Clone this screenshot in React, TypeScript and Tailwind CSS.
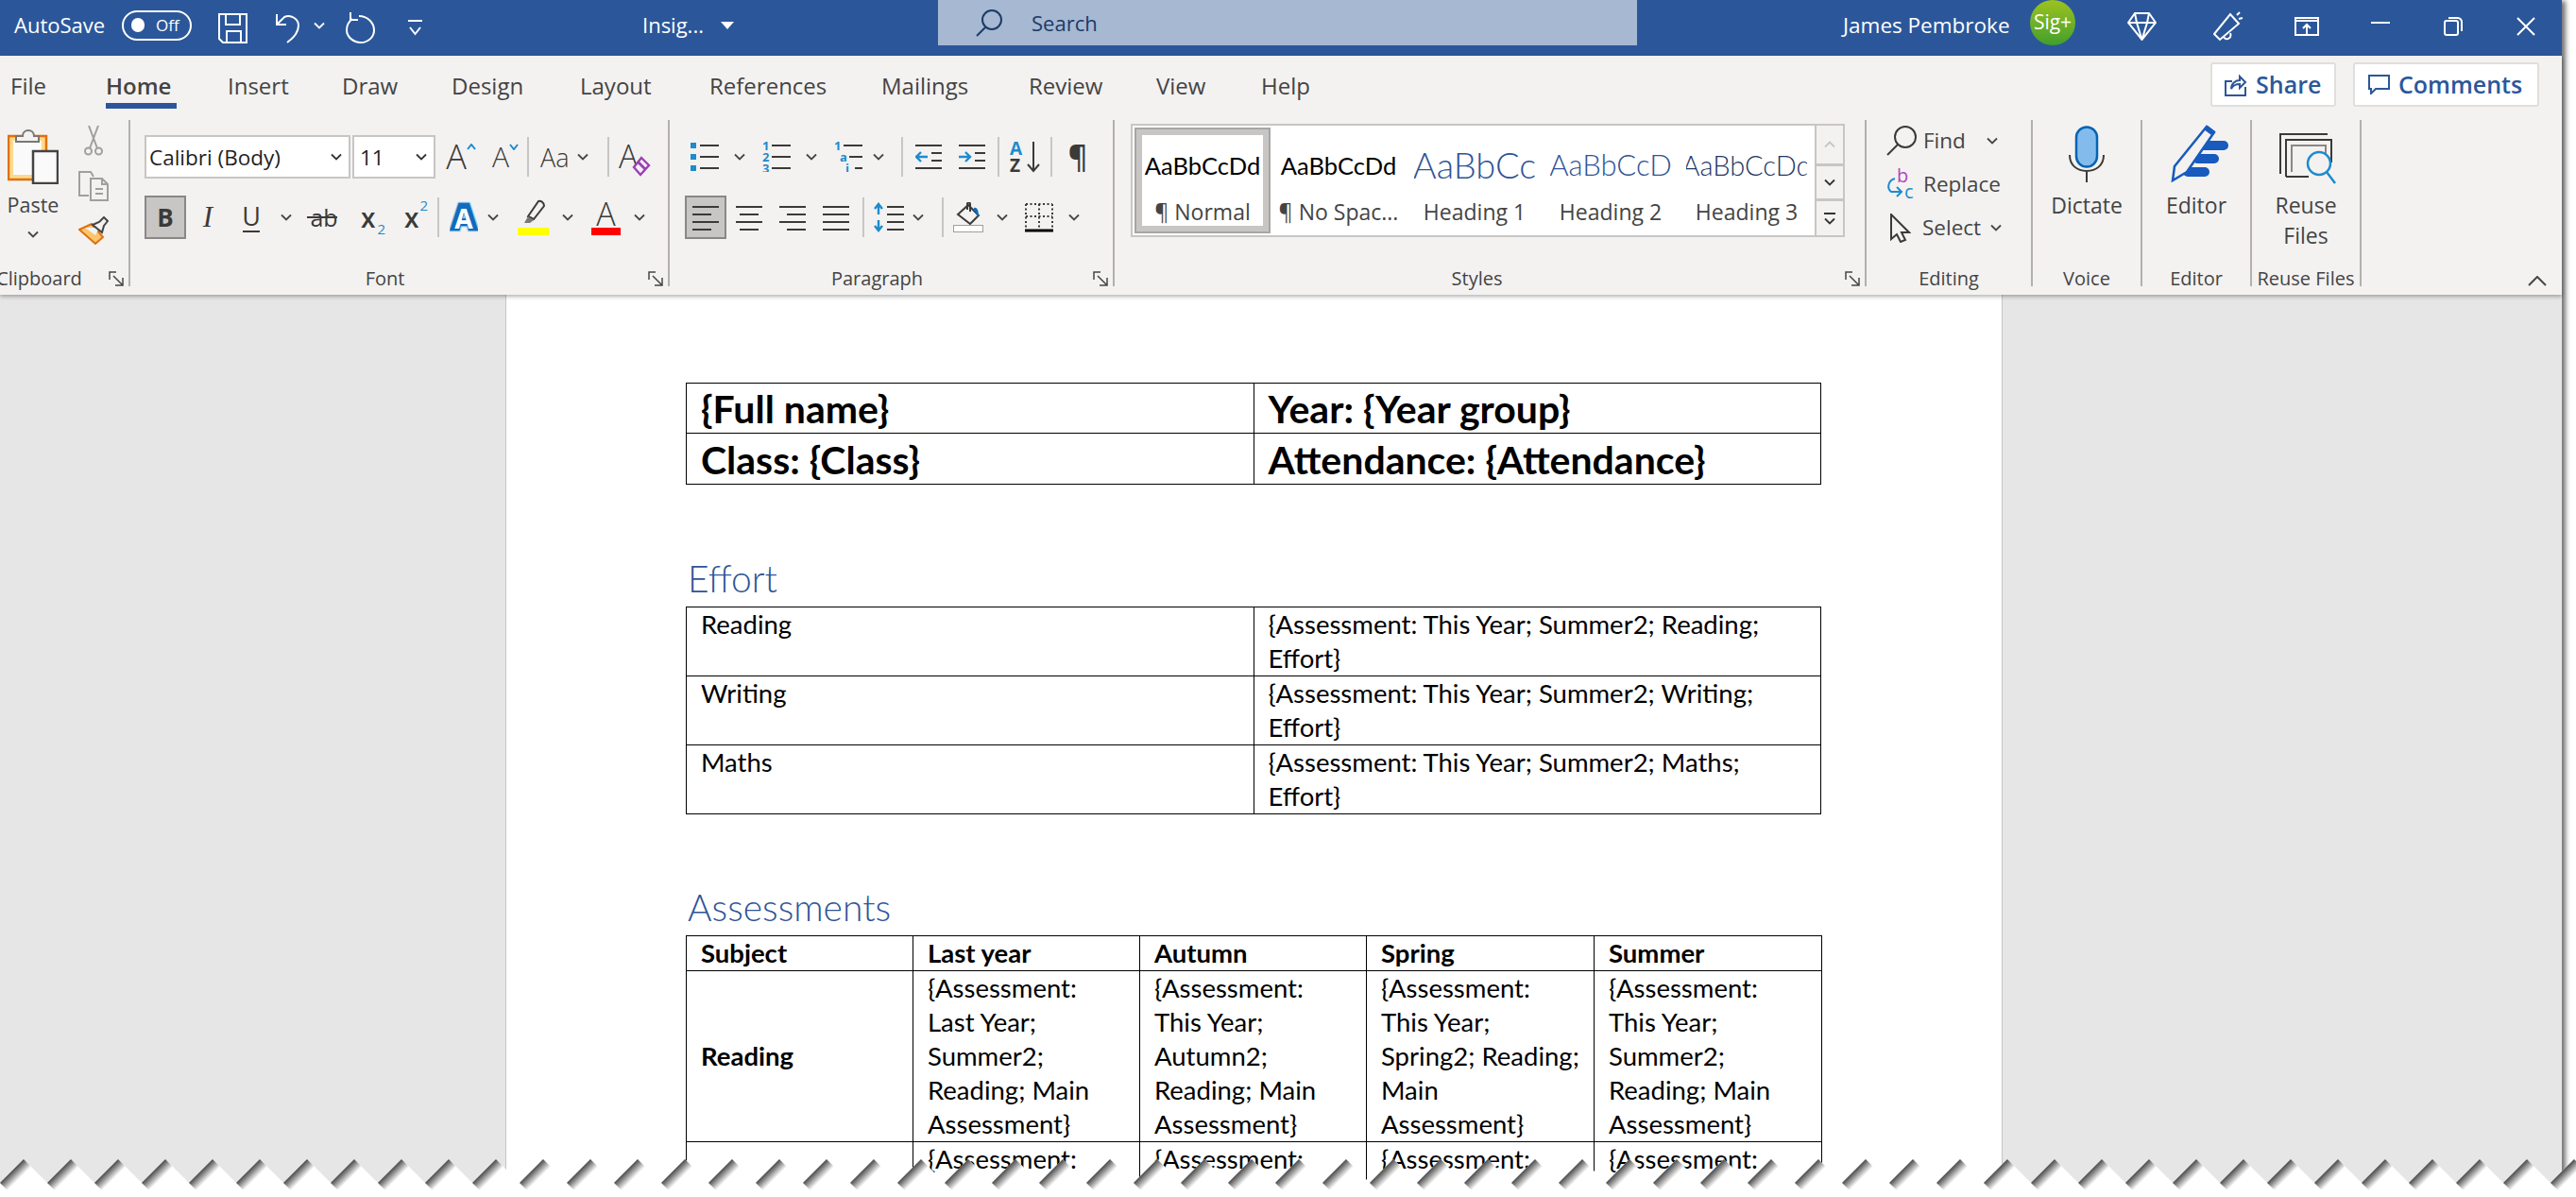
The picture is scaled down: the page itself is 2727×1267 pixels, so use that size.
import React from "react";

const dark = "#3b3a39";
const blue = "#1e8bcd";

function Chev({ className = "", color = "#484644" }: { className?: string; color?: string }) {
  return (
    <svg className={className} width="12" height="8" viewBox="0 0 12 8" fill="none">
      <path d="M1 1.5l5 5 5-5" stroke={color} strokeWidth="1.8" />
    </svg>
  );
}

function Cell({ className = "", children }: { className?: string; children?: React.ReactNode }) {
  return <div className={`flex shrink-0 items-center justify-center ${className}`}>{children}</div>;
}

function Sep({ className = "" }: { className?: string }) {
  return <div className={`h-[42px] w-[2px] shrink-0 bg-[#c8c6c4] ${className}`} />;
}

function Launcher() {
  return (
    <svg className="shrink-0" width="16" height="16" viewBox="0 0 16 16" fill="none" stroke="#484644" strokeWidth="1.5">
      <path d="M8 1H1v8M5 5l10 10M15 7v8H7" />
    </svg>
  );
}

function Group({
  label,
  className,
  launcher,
  labelClass = "",
  children,
}: {
  label: string;
  className: string;
  launcher?: boolean;
  labelClass?: string;
  children: React.ReactNode;
}) {
  return (
    <div className={`flex h-[176px] shrink-0 flex-col border-r-2 border-[#b3b0ad] ${className}`}>
      <div className="min-h-0 flex-1">{children}</div>
      <div className={`flex h-[16px] items-center ${launcher ? "pr-[5px]" : ""}`}>
        <div className={`flex-1 whitespace-nowrap text-center text-[20px] leading-[16px] text-[#444] ${labelClass}`}>{label}</div>
        {launcher && <Launcher />}
      </div>
    </div>
  );
}

function ListIcon({ marks }: { marks: "box" | "num" | "multi" }) {
  const ys = [4, 16, 28];
  return (
    <svg width="30" height="32" viewBox="0 0 30 32" fill="none">
      {ys.map((y) => (
        <path key={y} d={marks === "multi" && y === 28 ? "M22 28h8" : marks === "multi" && y === 16 ? "M16 16h14" : `M10 ${y}h20`} stroke={dark} strokeWidth="2" />
      ))}
      {marks === "box" && ys.map((y) => <rect key={y} x="0" y={y - 3} width="6" height="6" fill={blue} />)}
      {marks === "num" &&
        ["1", "2", "3"].map((t, i) => (
          <text key={t} x="0" y={ys[i] + 5} fontSize="13" fontWeight="700" fill={blue} fontFamily="Open Sans">
            {t}
          </text>
        ))}
      {marks === "multi" &&
        ["1", "a", "i"].map((t, i) => (
          <text key={t} x={i * 6} y={ys[i] + 5} fontSize="13" fontWeight="700" fill={blue} fontFamily="Open Sans">
            {t}
          </text>
        ))}
    </svg>
  );
}

function IndentIcon({ dir }: { dir: "in" | "out" }) {
  return (
    <svg width="28" height="32" viewBox="0 0 28 32" fill="none">
      <path d="M0 4h28M0 28h28M17 12h11M17 20h11" stroke={dark} strokeWidth="2" />
      <path d={dir === "out" ? "M13 16H1M6 11l-5 5 5 5" : "M0 16h12M7 11l5 5-5 5"} stroke={blue} strokeWidth="2.4" />
    </svg>
  );
}

function AlignIcon({ kind }: { kind: "left" | "center" | "right" | "full" }) {
  const shortLine = kind === "left" ? "0" : kind === "center" ? "4" : "8";
  return (
    <svg width="28" height="32" viewBox="0 0 28 32" fill="none" stroke={dark} strokeWidth="2">
      <path d="M0 5h28M0 21h28" />
      {kind === "full" ? <path d="M0 13h28M0 29h28" /> : (
        <>
          <path d={`M${shortLine} 13h20`} />
          <path d={`M${shortLine} 29h20`} />
        </>
      )}
    </svg>
  );
}

function PasteIcon() {
  return (
    <svg width="54" height="60" viewBox="0 0 54 60">
      <rect x="1" y="9" width="40" height="46" fill="#fdd98c" stroke="#e1700f" strokeWidth="2.5" />
      <rect x="6" y="14" width="30" height="36" fill="#fafafa" />
      <path d="M9 15v-6h7c0-8 12-8 12 0h5v6z" fill="#f3f2f1" stroke="#797775" strokeWidth="2" />
      <rect x="27" y="25" width="26" height="34" fill="#fafafa" stroke="#444" strokeWidth="2.5" />
    </svg>
  );
}

function PainterIcon() {
  return (
    <svg width="32" height="30" viewBox="0 0 32 30" fill="none">
      <path d="M1 14l13-6 12 14-8 7z" fill="#fbc56f" stroke="#e1700f" strokeWidth="2" />
      <path d="M7 12l15 0-4 8" fill="#f3f2f1" />
      <path d="M15 9l7-3 5-5 4 4-4 5-2 7z" fill="#f3f2f1" stroke="#444" strokeWidth="2" />
    </svg>
  );
}

function TextEffectA() {
  return (
    <svg width="32" height="36" viewBox="0 0 32 36">
      <text x="16" y="32" textAnchor="middle" fontSize="40" fontWeight="800" fontFamily="Open Sans" fill="#9dcdf0" stroke="#9dcdf0" strokeWidth="5">A</text>
      <text x="16" y="32" textAnchor="middle" fontSize="40" fontWeight="800" fontFamily="Open Sans" fill="#0f6cbd" stroke="#0f6cbd" strokeWidth="2.5">A</text>
      <text x="16" y="31" textAnchor="middle" fontSize="30" fontWeight="700" fontFamily="Open Sans" fill="#fff">A</text>
    </svg>
  );
}

function Dropdown({ label, className }: { label: string; className: string }) {
  return (
    <div className={`flex h-[46px] shrink-0 items-center justify-between border-2 border-[#c8c6c4] bg-white pl-[3px] pr-[7px] ${className}`}>
      <span className="mt-[2px] whitespace-nowrap text-[22.5px] text-[#1f1f1f]">{label}</span>
      <Chev color="#333" />
    </div>
  );
}

function StyleItem({
  preview,
  label,
  previewClass,
  selected,
}: {
  preview: string;
  label: string;
  previewClass: string;
  selected?: boolean;
}) {
  return (
    <div className={`flex h-[112px] w-[144px] shrink-0 flex-col items-center overflow-hidden ${selected ? "border-2 border-[#a6a6a6] shadow-[inset_0_0_0_6px_#c8c6c4]" : ""}`}>
      <div className={`flex h-[66px] w-[128px] items-end justify-center overflow-hidden whitespace-nowrap pb-[13px] font-['Lato',sans-serif] leading-none ${selected ? "mt-[-2px]" : ""} ${previewClass}`}>
        {preview}
      </div>
      <div className="mt-[8px] whitespace-nowrap text-[23px] leading-[30px] text-[#444]">{label}</div>
    </div>
  );
}

function BigLabel({ children }: { children: React.ReactNode }) {
  return <div className="text-center text-[23px] leading-[32px] text-[#444]">{children}</div>;
}

const tabs = [
  { name: "File", width: "w-[101px]" },
  { name: "Home", width: "w-[129px]", active: true },
  { name: "Insert", width: "w-[121px]" },
  { name: "Draw", width: "w-[116px]" },
  { name: "Design", width: "w-[136px]" },
  { name: "Layout", width: "w-[137px]" },
  { name: "References", width: "w-[182px]" },
  { name: "Mailings", width: "w-[156px]" },
  { name: "Review", width: "w-[135px]" },
  { name: "View", width: "w-[111px]" },
  { name: "Help", width: "w-[60px]" },
];

function TitleBar() {
  return (
    <div className="flex h-[59px] items-center bg-[#2b579a] pb-[6px] pl-[15px] text-[22px] text-white">
      <div className="w-[100px] shrink-0 whitespace-nowrap">AutoSave</div>
      <div className="ml-[14px] flex h-[32px] w-[74px] shrink-0 items-center rounded-full border-2 border-white pl-[8px]">
        <div className="h-[15px] w-[14px] rounded-full bg-white" />
        <span className="ml-[12px] text-[17px] leading-none">Off</span>
      </div>
      <svg className="ml-[28px] mt-[6px] shrink-0" width="31" height="32" viewBox="0 0 31 32" fill="none" stroke="#fff" strokeWidth="2">
        <path d="M1 1h29v30H5l-4-4zM8 1v11h15V1M9 31V19h15v12" />
      </svg>
      <svg className="ml-[28px] mt-[6px] shrink-0" width="27" height="32" viewBox="0 0 27 32" fill="none" stroke="#fff" strokeWidth="2">
        <path d="M3 1v11h10M3 12L11 4c7-3 15 2 15 9 0 7-5 13-12 18" />
      </svg>
      <Chev className="ml-[15px] shrink-0" color="#fff" />
      <svg className="ml-[22px] mt-[6px] shrink-0" width="32" height="34" viewBox="0 0 32 34" fill="none" stroke="#fff" strokeWidth="2">
        <path d="M14 4c9 0 16 7 16 15 0 7-6 13-14 13S1 26 1 19c0-5 2-9 6-12" />
        <path d="M5 0v8h8" />
      </svg>
      <svg className="ml-[34px] mt-[6px] shrink-0" width="15" height="20" viewBox="0 0 15 20" fill="none" stroke="#fff" strokeWidth="2">
        <path d="M0 2h15M2 9l5.5 7L13 9" />
      </svg>
      <div className="ml-[233px] w-[67px] shrink-0 whitespace-nowrap">Insig...</div>
      <div className="ml-[16px] h-0 w-0 shrink-0 border-x-[7px] border-t-[8px] border-x-transparent border-t-white" />
      <div className="ml-[216px] flex h-[48px] w-[740px] shrink-0 items-center self-start bg-[#a6b8d2] text-[#1c3a68]">
        <svg className="ml-[40px] shrink-0" width="28" height="29" viewBox="0 0 28 29" fill="none" stroke="#1c3a68" strokeWidth="2">
          <circle cx="17" cy="11" r="10" />
          <path d="M10 19L1 28" />
        </svg>
        <span className="ml-[31px]">Search</span>
      </div>
      <div className="ml-[218px] w-[178px] shrink-0 whitespace-nowrap text-[22.5px]">James Pembroke</div>
      <div className="ml-[20px] flex h-[48px] w-[48px] shrink-0 items-center justify-center self-start rounded-full bg-gradient-to-b from-[#9bc31c] to-[#3f9e2c] text-[21px]">Sig+</div>
      <svg className="ml-[55px] mt-[2px] shrink-0" width="31" height="30" viewBox="0 0 31 30" fill="none" stroke="#fff" strokeWidth="2">
        <path d="M8 1h15l7 10-14.500 18L1 11zM1 11h29M8 1l2 10 5.500 18M23 1l-2 10-5.500 18" />
      </svg>
      <svg className="ml-[60px] mt-[2px] shrink-0" width="32" height="32" viewBox="0 0 32 32" fill="none" stroke="#fff" strokeWidth="2">
        <path d="M1 24L18 3l9 10L7 30zM11 27c3 5 9 1 7-4M25 4l3-3M27 8l4-1" />
      </svg>
      <svg className="ml-[54px] mt-[2px] shrink-0" width="26" height="20" viewBox="0 0 26 20" fill="none" stroke="#fff" strokeWidth="2">
        <path d="M1 1h24v18H1zM1 4h24M13 18V8M9 12l4-4 4 4" />
      </svg>
      <div className="ml-[55px] mt-[-6px] h-[2px] w-[20px] shrink-0 bg-white" />
      <svg className="ml-[57px] mt-[2px] shrink-0" width="20" height="20" viewBox="0 0 20 20" fill="none" stroke="#fff" strokeWidth="2">
        <rect x="1" y="4" width="14" height="15" rx="2" />
        <path d="M5 1h10c2 0 4 2 4 4v10" />
      </svg>
      <svg className="ml-[57px] mt-[2px] shrink-0" width="20" height="20" viewBox="0 0 20 20" fill="none" stroke="#fff" strokeWidth="2">
        <path d="M1 1l18 18M19 1L1 19" />
      </svg>
    </div>
  );
}

function TabRow() {
  return (
    <div className="flex h-[68px] items-start justify-between pl-[11px] pr-[24px]">
      <div className="flex text-[24px] text-[#444]">
        {tabs.map((tab) => (
          <div key={tab.name} className={`pt-[15px] ${tab.width}`}>
            <div className={`leading-[34px] ${tab.active ? "font-semibold" : ""}`}>{tab.name}</div>
            {tab.active && <div className="mt-[1px] h-[6px] w-[75px] bg-[#2b579a]" />}
          </div>
        ))}
      </div>
      <div className="mt-[7px] flex gap-[18px] text-[25px] font-semibold text-[#2b579a]">
        <div className="flex h-[47px] w-[133px] items-center rounded-[3px] border-2 border-[#e1dfdd] bg-white pl-[13px]">
          <svg className="shrink-0" width="24" height="24" viewBox="0 0 24 24" fill="none" stroke="#2b579a" strokeWidth="2">
            <path d="M8 8H1v15h21v-9M7 16c0-6 5-9 9-9V3l6 6-6 6v-4c-4 0-7 1-9 5z" />
          </svg>
          <span className="ml-[9px]">Share</span>
        </div>
        <div className="flex h-[47px] w-[197px] items-center rounded-[3px] border-2 border-[#e1dfdd] bg-white pl-[14px]">
          <svg className="shrink-0" width="23" height="21" viewBox="0 0 23 21" fill="none" stroke="#2b579a" strokeWidth="2">
            <path d="M1 1h21v14H8l-5 5v-5H1z" />
          </svg>
          <span className="ml-[9px] whitespace-nowrap">Comments</span>
        </div>
      </div>
    </div>
  );
}

function ClipboardGroup() {
  return (
    <Group label="Clipboard" className="w-[138px]" launcher labelClass="ml-[-32px]">
      <div className="flex">
        <div className="ml-[7px] flex w-[56px] flex-col items-center pt-[8px]">
          <PasteIcon />
          <div className="mt-[6px] w-[60px] text-center text-[21.5px] leading-[32px] text-[#444]">Paste</div>
          <Chev className="mt-[11px]" />
        </div>
        <div className="ml-[20px] flex w-[32px] flex-col items-center pt-[6px]">
          <svg width="20" height="32" viewBox="0 0 20 32" fill="none" stroke="#a19f9d" strokeWidth="2">
            <circle cx="4.500" cy="27" r="3.500" />
            <circle cx="15.500" cy="27" r="3.500" />
            <path d="M6 24L15 0M14 24L5 0" />
          </svg>
          <svg className="mt-[16px]" width="32" height="32" viewBox="0 0 32 32" fill="none" stroke="#a19f9d" strokeWidth="2">
            <path d="M11 26H1V1h12l3 5M13 8h12l6 6v17H13zM25 8v6h6M18 19h8M18 24h8" />
          </svg>
          <div className="mt-[16px]">
            <PainterIcon />
          </div>
        </div>
      </div>
    </Group>
  );
}

function FontGroup() {
  return (
    <Group label="Font" className="w-[571px]" launcher labelClass="pr-[9px]">
      <div className="flex flex-col gap-[18px] pl-[15px] pt-[16px]">
        <div className="flex h-[46px] items-center">
          <Dropdown label="Calibri (Body)" className="w-[218px]" />
          <Dropdown label="11" className="ml-[2px] w-[88px] !pl-[6px]" />
          <Cell className="ml-[10px] w-[34px] items-start">
            <span className="text-[36px] font-light leading-[44px] text-[#3b3a39]">A</span>
            <svg className="mt-[8px]" width="10" height="7" viewBox="0 0 10 7" fill="none" stroke={blue} strokeWidth="2"><path d="M1 6l4-5 4 5" /></svg>
          </Cell>
          <Cell className="ml-[15px] w-[30px] items-start">
            <span className="text-[30px] font-light leading-[44px] text-[#3b3a39]">A</span>
            <svg className="mt-[8px]" width="10" height="7" viewBox="0 0 10 7" fill="none" stroke={blue} strokeWidth="2"><path d="M1 1l4 5 4-5" /></svg>
          </Cell>
          <Sep className="ml-[8px]" />
          <Cell className="ml-[12px] w-[53px] justify-start">
            <span className="text-[27px] font-light leading-none text-[#3b3a39]">Aa</span>
            <Chev className="ml-[8px]" />
          </Cell>
          <Sep className="ml-[18px]" />
          <div className="relative ml-[10px] h-[46px] w-[34px] shrink-0">
            <span className="text-[34px] font-light leading-[44px] text-[#3b3a39]">A</span>
            <svg className="absolute bottom-[2px] right-0" width="20" height="22" viewBox="0 0 20 22" fill="none">
              <path d="M10 2l8 8-9 10-7-8z" stroke="#9b3fb5" strokeWidth="2.4" fill="#f3f2f1" />
              <path d="M6 6l8 8" stroke="#9b3fb5" strokeWidth="3" />
            </svg>
          </div>
        </div>
        <div className="flex h-[46px] items-center text-[#3b3a39]">
          <Cell className="h-[46px] w-[44px] border-2 border-[#8a8886] bg-[#c8c6c4] text-[26px] font-bold">B</Cell>
          <Cell className="w-[46px] font-['Liberation_Serif',serif] text-[31px] italic">I</Cell>
          <Cell className="w-[46px] flex-col text-[27px] leading-[28px]">
            U<div className="mt-[1px] h-[2px] w-[18px] bg-[#3b3a39]" />
          </Cell>
          <Cell className="w-[28px]"><Chev /></Cell>
          <Cell className="relative w-[52px] text-[25px] leading-none">
            ab
            <div className="absolute left-[8px] top-[11px] h-[2px] w-[32px] bg-[#3b3a39]" />
          </Cell>
          <Cell className="ml-[13px] w-[30px] items-end justify-start text-[28px] font-semibold leading-none">
            x<span className="mb-[-6px] ml-[2px] text-[15px] font-normal text-[#1e8bcd]">2</span>
          </Cell>
          <Cell className="ml-[16px] w-[30px] items-start justify-start text-[28px] font-semibold leading-none">
            x<span className="ml-[1px] mt-[-6px] text-[15px] font-normal text-[#1e8bcd]">2</span>
          </Cell>
          <Sep className="ml-[5px]" />
          <Cell className="ml-[11px] w-[30px]"><TextEffectA /></Cell>
          <Cell className="w-[32px]"><Chev /></Cell>
          <div className="ml-[10px] flex w-[33px] shrink-0 flex-col items-center">
            <svg width="26" height="30" viewBox="0 0 26 30" fill="none">
              <path d="M7 18L18 2c2-1 6 1 6 5L13 21z" stroke="#3b3a39" strokeWidth="2" fill="#f3f2f1" />
              <path d="M7 18l6 4-4 3H3z" fill="#797775" />
            </svg>
            <div className="h-[8px] w-[33px] bg-[#ffff00]" />
          </div>
          <Cell className="w-[40px]"><Chev /></Cell>
          <div className="ml-[5px] flex w-[31px] shrink-0 flex-col items-center">
            <span className="text-[34px] font-light leading-[30px] text-[#3b3a39]">A</span>
            <div className="h-[8px] w-[31px] bg-[#ff0000]" />
          </div>
          <Cell className="w-[40px]"><Chev /></Cell>
        </div>
      </div>
    </Group>
  );
}

function ParagraphGroup() {
  return (
    <Group label="Paragraph" className="w-[471px]" launcher labelClass="pr-[9px]">
      <div className="flex flex-col gap-[18px] pl-[16px] pt-[16px]">
        <div className="flex h-[46px] items-center">
          <Cell className="ml-[6px] w-[30px]"><ListIcon marks="box" /></Cell>
          <Cell className="w-[44px]"><Chev /></Cell>
          <Cell className="ml-[2px] w-[30px]"><ListIcon marks="num" /></Cell>
          <Cell className="w-[44px]"><Chev /></Cell>
          <Cell className="ml-[2px] w-[30px]"><ListIcon marks="multi" /></Cell>
          <Cell className="w-[34px]"><Chev /></Cell>
          <Sep className="ml-[7px]" />
          <Cell className="ml-[13px] w-[28px]"><IndentIcon dir="out" /></Cell>
          <Cell className="ml-[18px] w-[28px]"><IndentIcon dir="in" /></Cell>
          <Sep className="ml-[13px]" />
          <Cell className="ml-[11px] w-[32px]">
            <svg width="32" height="34" viewBox="0 0 32 34" fill="none">
              <text x="0" y="15" fontSize="19" fontWeight="700" fontFamily="Open Sans" fill={blue}>A</text>
              <text x="0" y="33" fontSize="19" fontWeight="700" fontFamily="Open Sans" fill={dark}>Z</text>
              <path d="M25 1v31M19 25l6 7 6-7" stroke={dark} strokeWidth="2" />
            </svg>
          </Cell>
          <Sep className="ml-[11px]" />
          <Cell className="ml-[17px] w-[20px] text-[32px] font-semibold leading-none text-[#3b3a39]">¶</Cell>
        </div>
        <div className="flex h-[46px] items-center">
          <Cell className="h-[46px] w-[44px] border-2 border-[#8a8886] bg-[#c8c6c4]"><AlignIcon kind="left" /></Cell>
          <Cell className="ml-[10px] w-[28px]"><AlignIcon kind="center" /></Cell>
          <Cell className="ml-[18px] w-[28px]"><AlignIcon kind="right" /></Cell>
          <Cell className="ml-[18px] w-[28px]"><AlignIcon kind="full" /></Cell>
          <Sep className="ml-[14px]" />
          <Cell className="ml-[10px] w-[32px]">
            <svg width="32" height="32" viewBox="0 0 32 32" fill="none">
              <path d="M14 5h18M14 13h18M14 21h18M14 29h18" stroke={dark} strokeWidth="2" />
              <path d="M5 2v11M1 7l4-5 4 5M5 19v11M1 25l4 5 4-5" stroke={blue} strokeWidth="2.4" />
            </svg>
          </Cell>
          <Cell className="w-[30px]"><Chev /></Cell>
          <Sep className="ml-[10px]" />
          <div className="ml-[10px] flex w-[32px] shrink-0 flex-col items-center">
            <svg width="32" height="24" viewBox="0 0 32 24" fill="none">
              <path d="M5 13L16 3l11 11-9 9z" stroke={dark} strokeWidth="2" fill="#f3f2f1" />
              <path d="M15 8V2c0-2 3-2 3 0v8" stroke={dark} strokeWidth="2" />
              <path d="M22 6c4-1 5 4 5 9h-2c0-3-1-5-3-6z" fill="#0f6cbd" />
            </svg>
            <div className="h-[8px] w-[32px] border border-[#a19f9d] bg-white" />
          </div>
          <Cell className="w-[40px]"><Chev /></Cell>
          <Cell className="ml-[4px] w-[30px]">
            <svg width="30" height="32" viewBox="0 0 30 32" fill="none">
              <path d="M1 2v26M29 2v26M1 2h28M15 2v26M1 15h28" stroke={dark} strokeWidth="2" strokeDasharray="2 2.500" />
              <path d="M0 30h30" stroke="#000" strokeWidth="3" />
            </svg>
          </Cell>
          <Cell className="w-[44px]"><Chev /></Cell>
        </div>
      </div>
    </Group>
  );
}

function StylesGroup() {
  return (
    <Group label="Styles" className="w-[796px]" launcher labelClass="pr-[6px]">
      <div className="ml-[17px] mt-[4px] flex h-[120px] w-[756px] border-2 border-[#c8c6c4] bg-white p-[2px]">
        <StyleItem preview="AaBbCcDd" label="¶ Normal" previewClass="text-[25.5px] text-black" selected />
        <StyleItem preview="AaBbCcDd" label="¶ No Spac..." previewClass="text-[25.5px] text-black" />
        <StyleItem preview="AaBbCc" label="Heading 1" previewClass="text-[38px] font-light text-[#2f5496] !pb-[8px]" />
        <StyleItem preview="AaBbCcD" label="Heading 2" previewClass="text-[31px] font-light text-[#2f5496] !pb-[11px]" />
        <StyleItem preview="AaBbCcDd" label="Heading 3" previewClass="text-[29px] font-light text-[#1f3864] !pb-[12px]" />
        <div className="mb-[-2px] mr-[-2px] mt-[-2px] flex w-[30px] shrink-0 flex-col border-l-2 border-[#c8c6c4] bg-[#f3f2f1]">
          <Cell className="h-[40px]"><Chev className="rotate-180" color="#c8c6c4" /></Cell>
          <Cell className="h-[40px] border-y-[3px] border-[#c8c6c4]"><Chev color="#333" /></Cell>
          <Cell className="flex-1 flex-col gap-[3px]">
            <div className="h-[2px] w-[12px] bg-[#333]" />
            <Chev color="#333" />
          </Cell>
        </div>
      </div>
    </Group>
  );
}

function EditingGroup() {
  return (
    <Group label="Editing" className="w-[176px]">
      <div className="flex flex-col pl-[21px] pt-[3px] text-[22.5px] text-[#444]">
        <div className="flex h-[38px] items-center">
          <svg className="shrink-0" width="32" height="32" viewBox="0 0 32 32" fill="none" stroke={dark} strokeWidth="2">
            <circle cx="20" cy="12" r="11" />
            <path d="M12 20L1 31" />
          </svg>
          <span className="ml-[7px] w-[67px]">Find</span>
          <Chev />
        </div>
        <div className="mt-[8px] flex h-[38px] items-center">
          <svg className="shrink-0" width="30" height="34" viewBox="0 0 30 34" fill="none">
            <text x="11" y="15" fontSize="20" fontFamily="Open Sans" fill="#b146c2">b</text>
            <text x="19" y="32" fontSize="20" fontFamily="Open Sans" fill={blue}>c</text>
            <path d="M9 11C2 13 0 21 5 25h10M11 20l5 5-5 5" stroke={blue} strokeWidth="2" />
          </svg>
          <span className="ml-[9px]">Replace</span>
        </div>
        <div className="mt-[8px] flex h-[38px] items-center">
          <svg className="ml-[4px] shrink-0" width="22" height="31" viewBox="0 0 22 31" fill="none" stroke="#3b3a39" strokeWidth="2">
            <path d="M1 1v26l6-5 4 8 5-2-4-8h8z" />
          </svg>
          <span className="ml-[12px] w-[72px]">Select</span>
          <Chev />
        </div>
      </div>
    </Group>
  );
}

function App() {
  const colClass = "border border-black align-top pl-[15px]";
  const row3 = [
    ["{Assessment:", "Last Year;", "Summer2;", "Reading; Main", "Assessment}"],
    ["{Assessment:", "This Year;", "Autumn2;", "Reading; Main", "Assessment}"],
    ["{Assessment:", "This Year;", "Spring2; Reading;", "Main", "Assessment}"],
    ["{Assessment:", "This Year;", "Summer2;", "Reading; Main", "Assessment}"],
  ];
  const effort = [
    ["Reading", "{Assessment: This Year; Summer2; Reading;"],
    ["Writing", "{Assessment: This Year; Summer2; Writing;"],
    ["Maths", "{Assessment: This Year; Summer2; Maths;"],
  ];

  return (
    <div className="relative h-[1267px] w-[2727px] overflow-hidden bg-white font-['Open_Sans',sans-serif]">
      <div className="flex h-[1267px] w-[2712px] flex-col shadow-[5px_0_5px_-1px_rgba(0,0,0,0.55)]">
        <TitleBar />
        <div className="relative z-10 h-[253px] shrink-0 bg-[#f3f2f1] shadow-[0_2px_4px_rgba(0,0,0,0.3)]">
          <TabRow />
          <div className="flex h-[176px]">
            <ClipboardGroup />
            <FontGroup />
            <ParagraphGroup />
            <StylesGroup />
            <EditingGroup />
            <Group label="Voice" className="w-[116px]">
              <div className="flex flex-col items-center pt-[6px]">
                <svg width="38" height="60" viewBox="0 0 38 60" fill="none">
                  <rect x="8" y="1.500" width="22" height="42" rx="11" fill="#83bcec" stroke="#0563b4" strokeWidth="2.500" />
                  <path d="M1 31c0 11 8 17 18 17s18-6 18-17M19 48v12" stroke={dark} strokeWidth="2" />
                </svg>
                <div className="mt-[8px]"><BigLabel>Dictate</BigLabel></div>
              </div>
            </Group>
            <Group label="Editor" className="w-[116px]">
              <div className="flex flex-col items-center pt-[5px]">
                <svg className="ml-[6px]" width="62" height="61" viewBox="0 0 62 61" fill="none">
                  <rect x="30" y="17" width="32" height="10" rx="5" fill="#185abd" />
                  <rect x="24" y="31" width="28" height="10" rx="5" fill="#185abd" />
                  <rect x="14" y="45" width="28" height="10" rx="5" fill="#185abd" />
                  <path d="M39 2l8 6-29 42-15 9 2-15z" fill="#f3f2f1" stroke="#185abd" strokeWidth="2.500" />
                  <path d="M36 5l4-4 8 6-4 4z" fill="#185abd" />
                </svg>
                <div className="mt-[8px]"><BigLabel>Editor</BigLabel></div>
              </div>
            </Group>
            <Group label="Reuse Files" className="w-[116px]">
              <div className="flex flex-col items-center pt-[14px]">
                <svg className="ml-[4px]" width="60" height="54" viewBox="0 0 60 54" fill="none">
                  <path d="M1 43V1h50" stroke="#3b3a39" strokeWidth="2" />
                  <path d="M7 46V7h48v24M7 46h24" stroke="#3b3a39" strokeWidth="2" />
                  <path d="M13 41V13h36v14" stroke="#8a8886" strokeWidth="2" />
                  <circle cx="42" cy="32" r="12" fill="#f3f2f1" stroke={blue} strokeWidth="2.500" />
                  <path d="M50 41l9 12" stroke={blue} strokeWidth="2.500" />
                </svg>
                <div className="mt-[6px]">
                  <BigLabel>Reuse</BigLabel>
                  <BigLabel>Files</BigLabel>
                </div>
              </div>
            </Group>
            <div className="flex flex-1 items-end justify-end pr-[16px]">
              <svg width="20" height="11" viewBox="0 0 20 11" fill="none" stroke="#484644" strokeWidth="2">
                <path d="M1 10l9-9 9 9" />
              </svg>
            </div>
          </div>
        </div>

        <div className="min-h-0 flex-1 overflow-hidden bg-[#e6e6e6]">
          <div className="ml-[535px] h-[1100px] w-[1585px] border-x border-[#c6c6c6] bg-white pl-[190px] pt-[93px] font-['Lato',sans-serif] text-[27.5px] leading-[36px] text-black">
            <table className="w-[1202px] table-fixed border-collapse text-[41px] font-bold">
              <tbody>
                <tr className="h-[53px]">
                  <td className="border border-black pl-[15px] pt-[2px]">{"{Full name}"}</td>
                  <td className="border border-black pl-[15px] pt-[2px]">{"Year: {Year group}"}</td>
                </tr>
                <tr className="h-[54px]">
                  <td className="border border-black pl-[15px] pt-[2px]">{"Class: {Class}"}</td>
                  <td className="border border-black pl-[15px] pt-[2px]">{"Attendance: {Attendance}"}</td>
                </tr>
              </tbody>
            </table>

            <div className="flex h-[129px] items-end pb-[6px] pl-[2px] text-[39px] font-light leading-[48px] text-[#2f5496]">Effort</div>

            <table className="w-[1202px] table-fixed border-collapse">
              <tbody>
                {effort.map(([name, text]) => (
                  <tr key={name} className="h-[73px]">
                    <td className={colClass}>{name}</td>
                    <td className={colClass}>
                      <div className="whitespace-nowrap">{text}</div>
                      <div>{"Effort}"}</div>
                    </td>
                  </tr>
                ))}
              </tbody>
            </table>

            <div className="flex h-[128px] items-end pb-[6px] pl-[2px] text-[39px] font-light leading-[48px] text-[#2f5496]">Assessments</div>

            <table className="w-[1202px] table-fixed border-collapse">
              <colgroup>
                <col className="w-[240px]" />
                <col className="w-[240px]" />
                <col className="w-[240px]" />
                <col className="w-[241px]" />
                <col className="w-[241px]" />
              </colgroup>
              <tbody>
                <tr className="h-[37px] font-bold">
                  {["Subject", "Last year", "Autumn", "Spring", "Summer"].map((h) => (
                    <td key={h} className={colClass}>{h}</td>
                  ))}
                </tr>
                <tr className="h-[181px]">
                  <td className="border border-black pl-[15px] font-bold">Reading</td>
                  {row3.map((lines, i) => (
                    <td key={i} className={colClass}>
                      {lines.map((line, j) => (
                        <div key={j} className="whitespace-nowrap">{line}</div>
                      ))}
                    </td>
                  ))}
                </tr>
                <tr className="h-[181px]">
                  <td className={colClass} />
                  {row3.map((_, i) => (
                    <td key={i} className={colClass}>{"{Assessment:"}</td>
                  ))}
                </tr>
              </tbody>
            </table>
          </div>
        </div>
      </div>

      {/* torn paper edge over the bottom of the window */}
      <svg className="absolute bottom-0 left-0" width="2727" height="47" viewBox="0 0 2727 47">
        <defs>
          <linearGradient id="tear" gradientUnits="userSpaceOnUse" x1="12.500" y1="19.500" x2="20.500" y2="27.500">
            <stop offset="0" stopColor="#4a4a4a" />
            <stop offset="1" stopColor="#ffffff" />
          </linearGradient>
          <pattern id="teeth" patternUnits="userSpaceOnUse" width="50" height="47">
            <path d="M0 32L25 7l25 25v15H0z" fill="#fff" />
            <path d="M0 32L25 7l8 8L8 40z" fill="url(#tear)" />
          </pattern>
        </defs>
        <rect width="2727" height="47" fill="url(#teeth)" />
      </svg>
    </div>
  );
}

export default App;
